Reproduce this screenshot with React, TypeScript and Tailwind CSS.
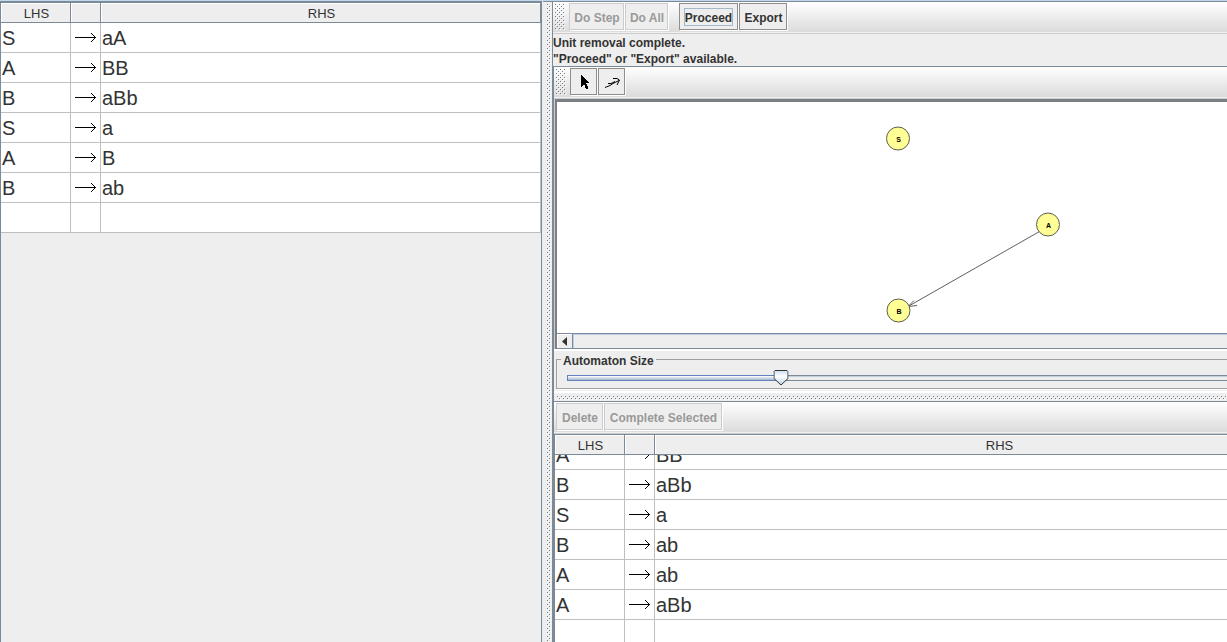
import { useId, useLayoutEffect, useRef, useState } from "react";
import type { ReactNode } from "react";

type Rule = [string, string];

const originalRules: Rule[] = [
  ["S", "aA"],
  ["A", "BB"],
  ["B", "aBb"],
  ["S", "a"],
  ["A", "B"],
  ["B", "ab"],
];

const newRules: Rule[] = [
  ["A", "BB"],
  ["B", "aBb"],
  ["S", "a"],
  ["B", "ab"],
  ["A", "ab"],
  ["A", "aBb"],
];

function Bumps() {
  const id = useId();
  return (
    <svg className="block h-full w-full" shapeRendering="crispEdges" aria-hidden="true">
      <defs>
        <pattern id={id} width="4" height="4" patternUnits="userSpaceOnUse">
          <rect x="0" y="0" width="1" height="1" fill="#6f7f8e" />
          <rect x="2" y="2" width="1" height="1" fill="#6f7f8e" />
          <rect x="1" y="1" width="1" height="1" fill="#fff" />
          <rect x="3" y="3" width="1" height="1" fill="#fff" />
        </pattern>
      </defs>
      <rect width="100%" height="100%" fill={`url(#${id})`} />
    </svg>
  );
}

function Arrow() {
  return (
    <svg width="22" height="9" viewBox="0 0 22 9" className="mx-auto block" shapeRendering="crispEdges" role="img" aria-label="derives">
      <path
        d="M0 4h21v1H0zM16 0h1v1h-1zM17 1h1v1h-1zM18 2h1v1h-1zM19 3h1v1h-1zM19 5h1v1h-1zM18 6h1v1h-1zM17 7h1v1h-1zM16 8h1v1h-1z"
        fill="#000"
      />
    </svg>
  );
}

function HeadCell({ children }: { children?: ReactNode }) {
  return (
    <th className="h-5 border-r border-b border-[#7a8a99] bg-[#eeeeee] pt-0.5 pr-0 pb-0 pl-0.5 text-center text-[13px] leading-4 font-normal shadow-[inset_1px_1px_0_#fff]">
      {children}
    </th>
  );
}

function RuleTable({ rules, label }: { rules: Rule[]; label: string }) {
  const cell = "h-[30px] border-r border-b border-[#bfbfbf] bg-white px-px py-0 text-[20px] leading-6";
  return (
    <table aria-label={label} className="w-full table-fixed border-separate border-spacing-0">
      <colgroup>
        <col className="w-[70px]" />
        <col className="w-[30px]" />
        <col />
      </colgroup>
      <thead className="sticky top-0">
        <tr>
          <HeadCell>LHS</HeadCell>
          <HeadCell />
          <HeadCell>RHS</HeadCell>
        </tr>
      </thead>
      <tbody>
        {rules.map(([lhs, rhs], i) => (
          <tr key={i}>
            <td className={cell}>{lhs}</td>
            <td className={cell}>
              <Arrow />
            </td>
            <td className={cell}>{rhs}</td>
          </tr>
        ))}
        <tr>
          <td className={cell} />
          <td className={cell} />
          <td className={cell} />
        </tr>
      </tbody>
    </table>
  );
}

function ToolBar({ grip, children }: { grip?: boolean; children: ReactNode }) {
  return (
    <div className="flex h-8 shrink-0 items-start border-b border-[#cccccc] bg-linear-to-b from-white to-[#dadada] pt-px pl-0.5 shadow-[inset_0_-1px_0_#f0f0f0]">
      {grip && (
        <div className="mt-px mr-1 h-[26px] w-2.5">
          <Bumps />
        </div>
      )}
      {children}
    </div>
  );
}

function ToolButton({
  children,
  disabled,
  focused,
  width,
  label,
}: {
  children: ReactNode;
  disabled?: boolean;
  focused?: boolean;
  width: string;
  label?: string;
}) {
  return (
    <button
      type="button"
      disabled={disabled}
      aria-label={label}
      className={`mr-px flex h-[27px] shrink-0 items-center justify-center border bg-[#eeeeee] text-xs font-bold whitespace-nowrap shadow-[1px_1px_0_#fff] ${width} ${
        disabled ? "border-[#cccccc] text-[#999999]" : "border-[#8e8e8e] text-[#333333]"
      }`}
    >
      {focused ? (
        <span className="flex h-[18px] items-center border border-[#a3b8cc] pt-0.5">{children}</span>
      ) : label ? (
        children
      ) : (
        <span className="pt-0.5 pl-px">{children}</span>
      )}
    </button>
  );
}

function PointerIcon() {
  return (
    <svg width="25" height="25" viewBox="0 0 25 25" shapeRendering="crispEdges" aria-hidden="true">
      <path d="M10 6v12l3-3 2 5h2v-2l-2-4h4z" fill="#000" />
    </svg>
  );
}

function TransitionIcon() {
  return (
    <svg width="25" height="25" viewBox="0 0 25 25" aria-hidden="true" fill="none" stroke="#000">
      <path d="M6 18.500L11 16.500 14 14.500 20 11.500M14 9.500h4l2.500 1.500-2.500 5M9 14.500h3l4-2" />
    </svg>
  );
}

const nodes = [
  { name: "S", x: 341, y: 36.5 },
  { name: "A", x: 491, y: 122.5 },
  { name: "B", x: 341.5, y: 208.5 },
];

function Graph() {
  return (
    <svg className="block h-[231px] w-full bg-white" role="img" aria-label="Unit production dependency graph">
      <path d="M482.500 129.500L351 204.500M357 198.500L351 204.500L360 203.500" fill="none" stroke="#606060" />
      {nodes.map((n) => (
        <g key={n.name}>
          <circle cx={n.x} cy={n.y} r="11.500" fill="#ffff96" stroke="#5c5c50" />
          <text x={n.x + 0.5} y={n.y + 3} textAnchor="middle" className="text-[7px] font-bold" fill="#000">
            {n.name}
          </text>
        </g>
      ))}
    </svg>
  );
}

function SizeSlider() {
  const [size, setSize] = useState(28);
  return (
    <fieldset className="mx-0.5 h-[38px] border border-[#a0a0a0] px-2.5 shadow-[1px_1px_0_#fff]">
      <legend className="-ml-1.5 h-4 px-0.5 pt-0.5 text-xs leading-4 font-bold">
        <label htmlFor="automaton-size">Automaton Size</label>
      </legend>
      <div className="relative mt-px h-4">
        <div className="absolute inset-x-0 top-[7px] h-1.5 border border-[#7a8a99] bg-[#eeeeee] shadow-[inset_0_1px_0_#c0d0e0]">
          <div
            className="-m-px h-1.5 border border-[#6382bf] bg-linear-to-b from-white to-[#a3b8cc]"
            style={{ width: `${size}%` }}
          />
        </div>
        <svg
          width="15"
          height="16"
          viewBox="0 0 15 16"
          className="absolute top-0.5 -translate-x-1/2"
          style={{ left: `${size}%` }}
          aria-hidden="true"
        >
          <defs>
            <linearGradient id="knob" x1="0" y1="0" x2="0" y2="1">
              <stop offset="0" stopColor="#c8ddf2" />
              <stop offset="0.400" stopColor="#fff" />
              <stop offset="1" stopColor="#b8cfe5" />
            </linearGradient>
          </defs>
          <path d="M1.500 0.500h12l1 1v7l-7 6.500-7-6.500v-7z" fill="url(#knob)" stroke="#333" />
        </svg>
        <input
          id="automaton-size"
          type="range"
          value={size}
          onChange={(e) => setSize(Number(e.target.value))}
          className="absolute inset-0 w-full opacity-0"
        />
      </div>
    </fieldset>
  );
}

export default function App() {
  const scroller = useRef<HTMLDivElement>(null);
  useLayoutEffect(() => {
    if (scroller.current) scroller.current.scrollTop = 15;
  }, []);

  return (
    <main className="flex h-screen flex-col overflow-hidden border-t border-[#c3d7ec] bg-[#eeeeee] font-['Liberation_Sans',Arial,sans-serif] text-[#333333]">
      <div className="flex min-h-0 flex-1">
        <section className="w-[542px] shrink-0 border-t-2 border-r border-l border-[#7a8a99]">
          <RuleTable rules={originalRules} label="Original grammar" />
        </section>

        <div className="w-2.5 shrink-0 border-t border-l-2 border-t-[#7a8a99] border-l-[#eeeeee] pt-0.5 pl-[3px]">
          <div className="h-full w-1">
            <Bumps />
          </div>
        </div>

        <section className="flex min-w-[791px] flex-1 flex-col border-t border-l border-[#7a8a99]">
          <ToolBar grip>
            <ToolButton disabled width="w-[55px]">Do Step</ToolButton>
            <ToolButton disabled width="w-[43px]">Do All</ToolButton>
            <div className="w-2.5" />
            <ToolButton focused width="w-[59px]">Proceed</ToolButton>
            <ToolButton width="w-[48px]">Export</ToolButton>
          </ToolBar>
          <p className="h-8 shrink-0 pt-px text-xs leading-4 font-bold">
            Unit removal complete.
            <br />
            "Proceed" or "Export" available.
          </p>

          <div className="flex min-h-0 flex-1 flex-col border-t border-l border-[#7a8a99]">
            <ToolBar grip>
              <ToolButton width="w-[27px]" label="Attribute editor">
                <PointerIcon />
              </ToolButton>
              <ToolButton width="w-[27px]" label="Transition creator">
                <TransitionIcon />
              </ToolButton>
            </ToolBar>

            <div className="shrink-0 border-l border-[#cccccc]">
              <div className="border-t-[3px] border-l-2 border-[#7c7f83]">
                <Graph />
                <div className="flex h-4 border-y border-[#7a8a99]">
                  <button
                    type="button"
                    aria-label="Scroll left"
                    className="flex w-4 items-center justify-center border-r border-[#7a8a99] pr-px shadow-[inset_1px_1px_0_#fff]"
                  >
                    <svg width="5" height="9" viewBox="0 0 5 9" aria-hidden="true">
                      <path d="M5 0v9L0 4.500z" fill="#333" />
                    </svg>
                  </button>
                  <div className="flex-1 shadow-[inset_1px_1px_0_#b8cfe5]" />
                </div>
              </div>
            </div>

            <div className="h-[43px] shrink-0 border-t-2 border-b border-white">
              <SizeSlider />
            </div>

            <div className="h-[9px] shrink-0 border-t border-white pt-[3px] pl-[3px]">
              <div className="h-1 w-full">
                <Bumps />
              </div>
            </div>

            <div className="flex min-h-0 flex-1 flex-col border-t border-[#7a8a99]">
              <ToolBar>
                <ToolButton disabled width="w-[47px]">Delete</ToolButton>
                <ToolButton disabled width="w-[118px]">Complete Selected</ToolButton>
              </ToolBar>
              <div ref={scroller} className="min-h-0 flex-1 overflow-hidden border-t border-l border-[#7a8a99]">
                <RuleTable rules={newRules} label="New grammar" />
              </div>
            </div>
          </div>
        </section>
      </div>
    </main>
  );
}
